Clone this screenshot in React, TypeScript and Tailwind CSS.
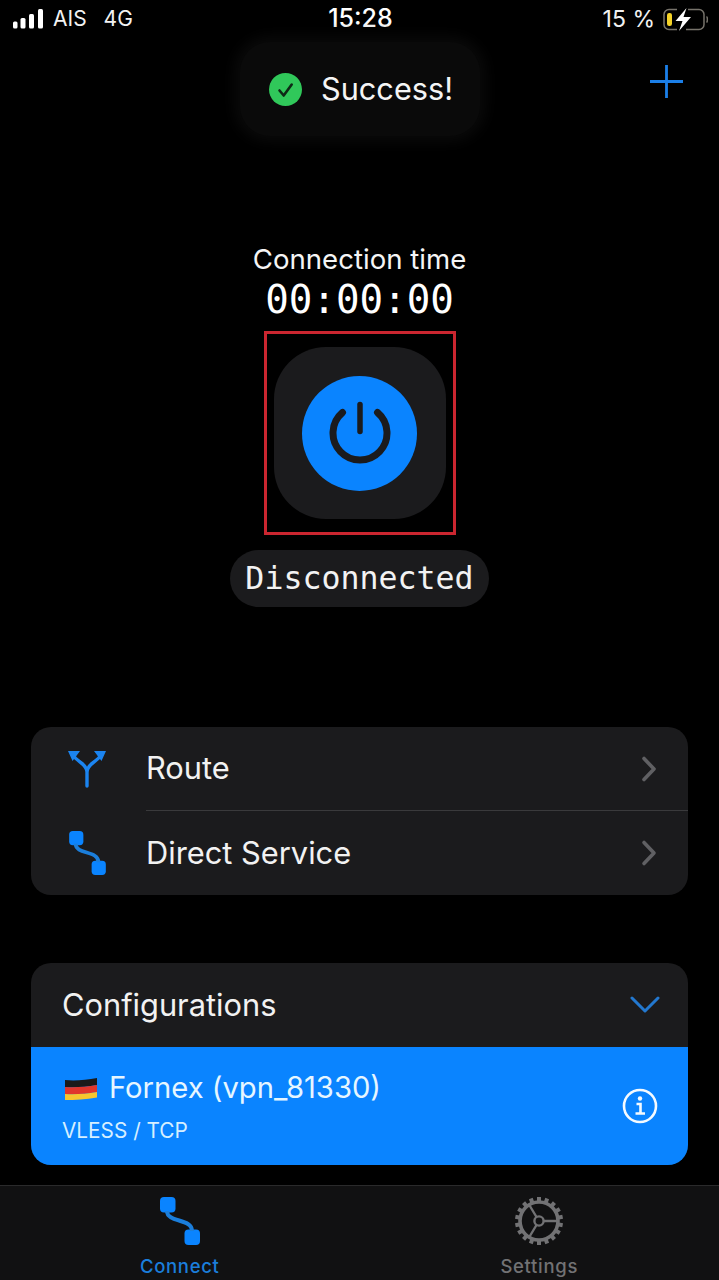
import React from 'react';

const sans = { fontFamily: 'Inter, "Noto Sans", sans-serif' };

const SignalIcon = () => (
  <svg width="31" height="20" viewBox="0 0 31 20" fill="#fff">
    <rect x="0" y="12.5" width="4.5" height="7" rx="1.5" />
    <rect x="7.5" y="9" width="5" height="10.5" rx="1.5" />
    <rect x="16" y="5" width="5" height="14.5" rx="1.5" />
    <rect x="25" y="0" width="5" height="19.5" rx="1.5" />
  </svg>
);

const BatteryIcon = () => (
  <svg width="46" height="23" viewBox="0 0 46 23">
    <path d="M15 1.5H7a5 5 0 0 0-5 5v10a5 5 0 0 0 5 5h8M24 21.5h13a5 5 0 0 0 5-5v-10a5 5 0 0 0-5-5H26" fill="none" stroke="#77736b" strokeWidth="1.5" />
    <rect x="5" y="5" width="5" height="13" rx="2.2" fill="#f5d328" />
    <path d="M24.5 0 13.5 13h7L17 23l12-14h-7.5z" fill="#fff" />
    <path d="M44.5 8.5c1.2.8 1.2 5.2 0 6" fill="none" stroke="#77736b" strokeWidth="1.5" />
  </svg>
);

const StatusBar = () => (
  <div className="grid h-[38px] shrink-0 grid-cols-3 items-center pl-[13px] pr-[11px] text-[#f2f2f2]">
    <div className="flex items-center text-[21px]">
      <SignalIcon />
      <span className="ml-[9px]">AIS</span>
      <span className="ml-[17px]">4G</span>
    </div>
    <div className="text-center text-[25px] font-medium text-white">15:28</div>
    <div className="flex items-center justify-end gap-[7px] text-[23px]">
      <span>15 %</span>
      <BatteryIcon />
    </div>
  </div>
);

const SuccessToast = () => (
  <div className="absolute left-[240px] top-[42px] flex h-[94px] w-[240px] items-center gap-[19px] rounded-[30px] bg-[#0a0a0a] pl-[29px] shadow-[0_0_14px_6px_#0a0a0a]">
    <svg width="33" height="33" viewBox="0 0 33 33">
      <circle cx="16.5" cy="16.5" r="16.5" fill="#30c85a" />
      <path d="M10.5 17.5l4.2 5 8-11" fill="none" stroke="#0e2a16" strokeWidth="2.6" strokeLinecap="round" strokeLinejoin="round" />
    </svg>
    <span className="text-[30.7px] text-[#f5f5f5]">Success!</span>
  </div>
);

const PowerIcon = () => (
  <svg width="62" height="64" viewBox="0 0 62 64" fill="none" stroke="#1b1b1d" strokeLinecap="round">
    <path d="M31 3.5v27" strokeWidth="5.5" />
    <path d="M13.5 11.5A27 27 0 1 0 48.5 11.5" strokeWidth="7" />
  </svg>
);

const RouteIcon = () => (
  <svg width="38" height="38" viewBox="0 0 38 38" fill="none">
    <path d="M19 36V22C19 14 9 12 5 5M19 22C19 14 29 12 33 5" stroke="#1b84f0" strokeWidth="3.4" strokeLinecap="round" />
    <path d="M0 1h12L4.5 11zM38 1H26L33.5 11z" fill="#1b84f0" />
  </svg>
);

// two rounded nodes joined by a curved link
const LinkIcon = ({ width, height }: { width: number; height: number }) => (
  <svg width={width} height={height} viewBox="0 0 40 48">
    <rect x="0" y="0" width="15.5" height="15.5" rx="4" fill="#0a84ff" />
    <rect x="24.5" y="32.5" width="15.5" height="15.5" rx="4" fill="#0a84ff" />
    <path d="M7 14c0 12 25 7 25 20" fill="none" stroke="#1b7edb" strokeWidth="4" />
  </svg>
);

const Chevron = () => (
  <svg width="16" height="28" viewBox="0 0 16 28" fill="none" stroke="#606063" strokeWidth="3.6" strokeLinecap="round" strokeLinejoin="round">
    <path d="M3 3.5l10 10.5L3 24.5" />
  </svg>
);

const FlagIcon = () => (
  <svg width="34" height="24" viewBox="0 0 34 24">
    <path d="M1 4C11 5 22 4 33 2v7C22 11 11 11.5 1 11z" fill="#1a1a1a" />
    <path d="M1 11C11 11.5 22 11 33 9v7C22 18 11 18.5 1 18z" fill="#e0362c" />
    <path d="M1 18C11 18.5 22 18 33 16v5.5C22 23.5 11 24 1 24z" fill="#f7c62f" />
  </svg>
);

const InfoIcon = () => (
  <svg width="36" height="36" viewBox="0 0 36 36" fill="none" stroke="#f4faff">
    <circle cx="18" cy="18" r="16" strokeWidth="2.6" />
    <circle cx="18" cy="10.5" r="2.2" fill="#f4faff" stroke="none" />
    <path d="M14.5 16H18.5V25M13.5 25.5H23" strokeWidth="2.6" />
  </svg>
);

// cog drawn from a toothed ring, a hub and three spokes
const GearIcon = () => {
  const teeth = Array.from({ length: 18 }, (_, i) => i * 20);
  return (
    <svg width="50" height="50" viewBox="0 0 50 50" fill="none" stroke="#727274">
      <circle cx="25" cy="25" r="19" strokeWidth="3.6" />
      {teeth.map((deg) => (
        <rect key={deg} x="23" y="1" width="4" height="5" fill="#727274" stroke="none" transform={`rotate(${deg} 25 25)`} />
      ))}
      <circle cx="25" cy="25" r="4.6" strokeWidth="2.4" />
      <path d="M30 25h15M22.5 21 15 8.5M22.5 29 15 41.5" strokeWidth="2.4" />
    </svg>
  );
};

const NavRow = ({ icon, label, className }: { icon: React.ReactNode; label: string; className: string }) => (
  <div className={`flex items-center ${className}`}>
    <div className="flex w-[115px] justify-center pr-[1px]">
      <div className="mr-[2px]">{icon}</div>
    </div>
    <span className="flex-1 text-[30.8px] text-[#f2f2f2]">{label}</span>
    <div className="mr-[31px]">
      <Chevron />
    </div>
  </div>
);

export default function App() {
  return (
    <div className="relative flex h-[1280px] flex-col overflow-hidden bg-black" style={sans}>
      <StatusBar />
      <SuccessToast />

      {/* add config button */}
      <div className="mt-[27px] flex justify-end pr-[36px]">
        <svg width="33" height="33" viewBox="0 0 33 33" stroke="#1b7fe8" strokeWidth="2.8">
          <path d="M16.5 0v33M0 16.5h33" />
        </svg>
      </div>

      {/* connection state */}
      <div className="mt-[143px] flex flex-col items-center">
        <div className="text-[27.6px] leading-[36px] text-[#f5f5f5]">Connection time</div>
        <div className="mt-[1px] text-[39.2px] leading-[44px] text-white" style={{ fontFamily: '"DejaVu Sans Mono", monospace' }}>
          00:00:00
        </div>
        <div className="mt-[9px] flex h-[204px] w-[192px] items-center justify-center border-[3px] border-[#cb2630]">
          <div className="flex h-[172px] w-[172px] items-center justify-center rounded-[52px] bg-[#1b1b1d]">
            <div className="flex h-[115px] w-[115px] items-center justify-center rounded-full bg-[#0a84ff]">
              <PowerIcon />
            </div>
          </div>
        </div>
        <div
          className="mt-[15px] flex h-[57px] w-[259px] items-center justify-center rounded-full bg-[#1b1b1d] text-[31.6px] text-[#f2f2f2]"
          style={{ fontFamily: '"DejaVu Sans Mono", monospace' }}
        >
          Disconnected
        </div>
      </div>

      {/* route + service links */}
      <div className="mx-[31px] mt-[120px] rounded-[20px] bg-[#1b1b1d]">
        <NavRow className="h-[83px]" icon={<RouteIcon />} label="Route" />
        <div className="ml-[115px] h-px bg-[#3a3a3c]" />
        <NavRow className="h-[84px]" icon={<LinkIcon width={37} height={44} />} label="Direct Service" />
      </div>

      {/* configurations list */}
      <div className="mx-[31px] mt-[68px] overflow-hidden rounded-[20px] bg-[#1b1b1d]">
        <div className="flex h-[84px] items-center justify-between pl-[31px] pr-[28px]">
          <span className="text-[30.8px] text-[#f2f2f2]">Configurations</span>
          <svg width="30" height="18" viewBox="0 0 30 18" fill="none" stroke="#2378cf" strokeWidth="3" strokeLinecap="round" strokeLinejoin="round">
            <path d="M2 2l13 13L28 2" />
          </svg>
        </div>
        <div className="flex h-[118px] items-center justify-between bg-[#0a84ff] pl-[31px] pr-[30px]">
          <div>
            <div className="flex items-center text-[29.2px] leading-[36px] text-[#e6f6ff]">
              <span className="ml-[2px] mr-[11px]">
                <FlagIcon />
              </span>
              Fornex (vpn_81330)
            </div>
            <div className="mt-[13px] text-[20.8px] leading-[24px] text-[#d6efff]">VLESS / TCP</div>
          </div>
          <InfoIcon />
        </div>
      </div>

      {/* tab bar */}
      <div className="mt-auto grid h-[95px] grid-cols-2 border-t border-[#2a2a2b] bg-[#111112] text-[18.5px] tracking-[0.7px]">
        <div className="flex flex-col items-center pt-[11px]">
          <LinkIcon width={40} height={48} />
          <span className="mt-[8px] font-medium text-[#1b7edb]">Connect</span>
        </div>
        <div className="flex flex-col items-center pt-[10px]">
          <GearIcon />
          <span className="mt-[7px] font-medium text-[#727274]">Settings</span>
        </div>
      </div>
    </div>
  );
}
